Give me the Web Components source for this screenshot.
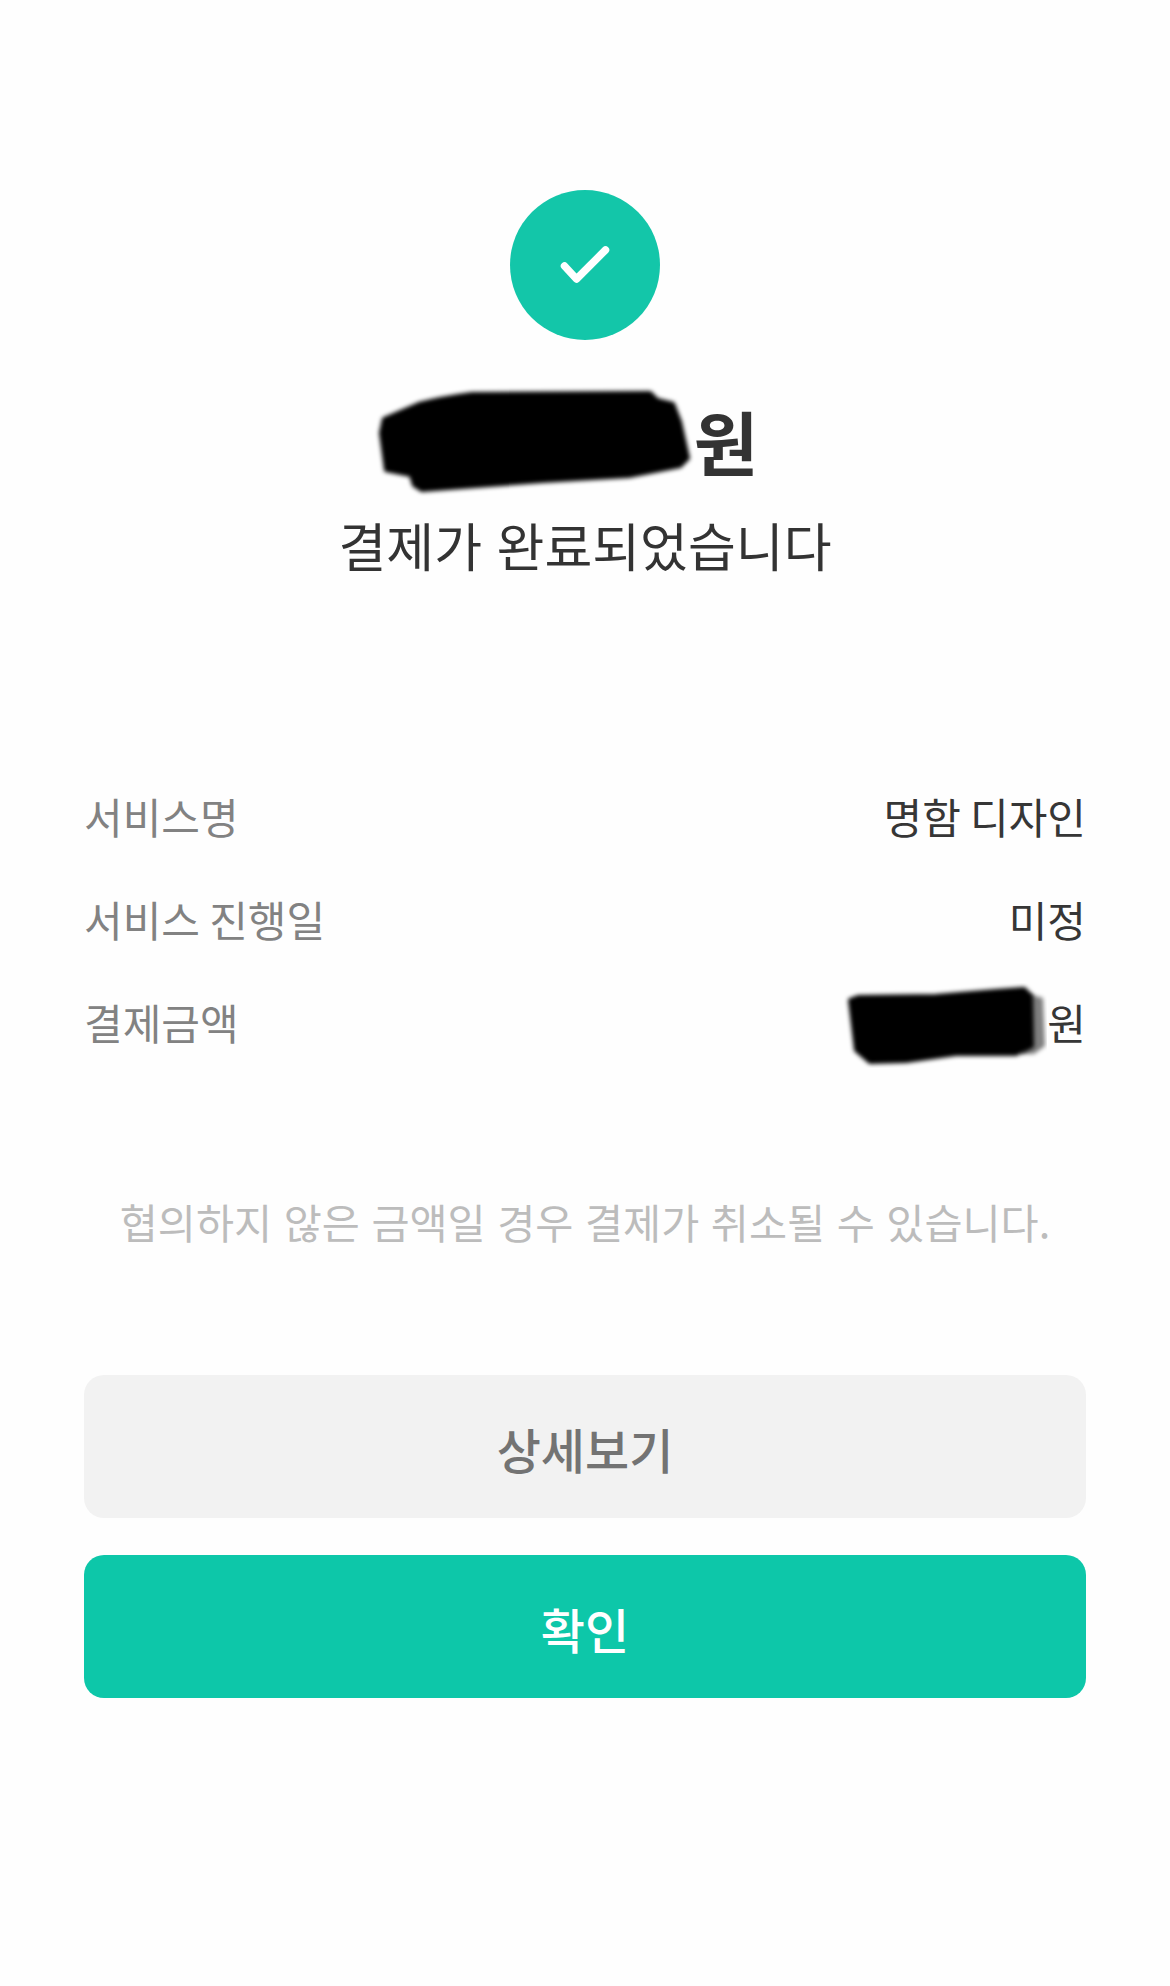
<!doctype html>
<html lang="ko"><head><meta charset="utf-8">
<style>
html,body{margin:0;background:#fff}
body{font-family:"Noto Sans CJK KR","Noto Sans",sans-serif;color:#333}
</style></head><body>
<payment-done></payment-done>
<script>
class RedactBlob extends HTMLElement{
  connectedCallback(){
    const w=+this.getAttribute('w'),h=+this.getAttribute('h');
    const d2=this.getAttribute('d2');
    const r=this.attachShadow({mode:'open'});
    r.innerHTML=`<style>:host{display:block;flex:none;width:${w}px;height:${h}px}svg{display:block;overflow:visible}</style>
    <svg width="${w}" height="${h}" viewBox="0 0 ${w} ${h}"><defs><filter id="b" x="-5%" y="-8%" width="110%" height="116%"><feGaussianBlur stdDeviation="2.2"/></filter></defs>
    ${d2?`<path filter="url(#b)" fill="#000" fill-opacity=".5" d="${d2}"/>`:''}
    <path filter="url(#b)" fill="#000" stroke="#000" stroke-width="4" stroke-linejoin="round" d="${this.getAttribute('d')}"/></svg>`;
  }
}
customElements.define('redact-blob',RedactBlob);

class CheckBadge extends HTMLElement{
  constructor(){super();this.attachShadow({mode:'open'}).innerHTML=`<style>:host{display:block;width:150px;height:150px}svg{display:block}</style>
  <svg width="150" height="150" viewBox="0 0 150 150"><circle cx="75" cy="75" r="75" fill="#13c6a9"/><path d="M54.500 76L66.500 89L95.500 60" fill="none" stroke="#fff" stroke-width="7.500" stroke-linecap="round" stroke-linejoin="round"/></svg>`;}
}
customElements.define('check-badge',CheckBadge);

class InfoRow extends HTMLElement{
  constructor(){super();this.attachShadow({mode:'open'}).innerHTML=`<style>
  :host{display:flex;justify-content:space-between;align-items:center;height:103px;font-size:42px;line-height:60px;word-spacing:-2.500px}
  .l{color:#828282}.v{color:#363636;display:flex;align-items:center}
  </style><span class="l"><slot name="label"></slot></span><span class="v"><slot></slot></span>`;}
}
customElements.define('info-row',InfoRow);

class ActionButton extends HTMLElement{
  constructor(){super();this.attachShadow({mode:'open'}).innerHTML=`<style>
  :host{display:flex;align-items:center;justify-content:center;box-sizing:border-box;height:143px;padding-top:3px;border-radius:20px;font-size:48px;font-weight:500;background:#f2f2f2;color:#737373}
  :host([primary]){background:#0dc7a9;color:#fff}
  </style><slot></slot>`;}
}
customElements.define('action-button',ActionButton);

class PaymentDone extends HTMLElement{
  constructor(){super();this.attachShadow({mode:'open'}).innerHTML=`<style>
  :host{display:block;box-sizing:border-box;height:1986px;padding:190px 84px 0;background:#fefefe}
  .top{display:flex;flex-direction:column;align-items:center}
  .amount{display:flex;align-items:center;height:110px;margin-top:46px;font-size:70px;font-weight:700;color:#333;line-height:110px}
  .amount redact-blob{margin:0 3px 0 -35px}
  .sub{font-size:52px;line-height:70px;color:#333;margin-top:14px}
  .rows{margin-top:184px}
  .note{margin-top:118px;text-align:center;font-size:41.400px;line-height:60px;color:#bcbcbc;white-space:nowrap}
  .btns{display:flex;flex-direction:column;gap:37px;margin-top:124px}
  </style>
  <div class="top">
    <check-badge></check-badge>
    <div class="amount"><redact-blob w="314" h="102" d="M7 29L42 14Q65 8 95 4L273 3L280 10L296 14L303 32L311 68L303 76L252 86L165 91L45 100L37 95L34 85L9 80L4 43Z"></redact-blob><span>원</span></div>
    <div class="sub">결제가 완료되었습니다</div>
  </div>
  <div class="rows">
    <info-row><span slot="label">서비스명</span>명함 디자인</info-row>
    <info-row><span slot="label">서비스 진행일</span>미정</info-row>
    <info-row><span slot="label">결제금액</span><redact-blob w="199" h="76" style="margin-right:2px" d="M4 16L12 13L90 12L150 7L178 5L185 12L186 62L170 70L110 70L60 77L24 78L10 66Z" d2="M183 10L197 14L199 62L188 70L175 70Z"></redact-blob>원</info-row>
  </div>
  <div class="note">협의하지 않은 금액일 경우 결제가 취소될 수 있습니다.</div>
  <div class="btns">
    <action-button>상세보기</action-button>
    <action-button primary>확인</action-button>
  </div>`;}
}
customElements.define('payment-done',PaymentDone);
</script>
</body></html>
